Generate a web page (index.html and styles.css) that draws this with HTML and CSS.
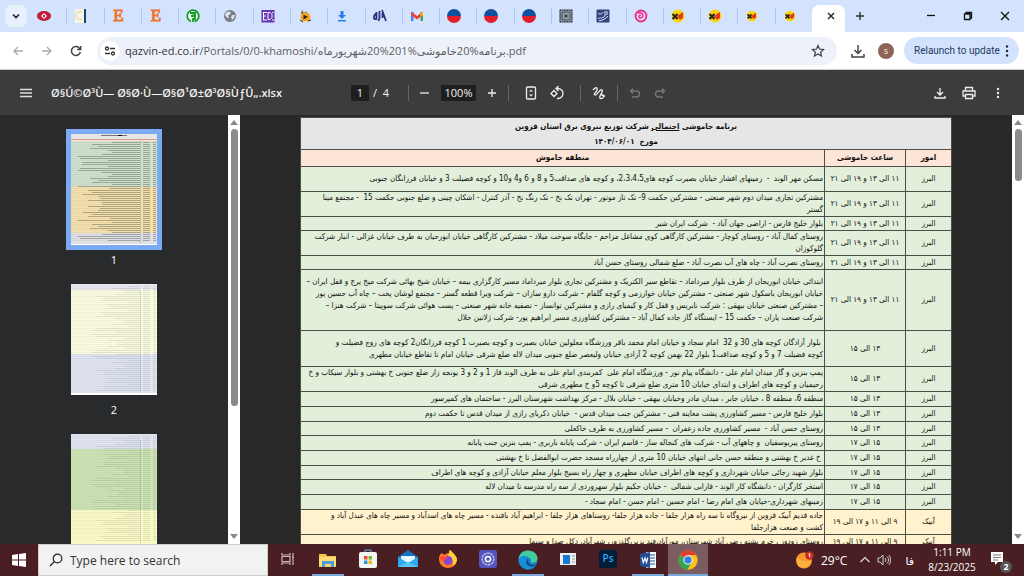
FILE: index.html
```html
<!DOCTYPE html>
<html lang="en">
<head>
<meta charset="utf-8">
<title>PDF viewer</title>
<link rel="stylesheet" href="styles.css">
</head>
<body>
<header class="tabstrip">
  <button class="tab-search" aria-label="Search tabs"><svg width="10" height="10" viewBox="0 0 10 10"><path d="M2 3.500l3 3 3-3" fill="none" stroke="#222" stroke-width="1.600"/></svg></button>
  <nav class="tabs" aria-label="Tabs">
    <a href="#" class="tab" aria-label="Tab 1"><svg viewBox="0 0 16 16"><ellipse cx="8" cy="8" rx="7" ry="5" fill="#c2183a"/><path d="M5 8l3-3 3 3-3 3z" fill="#fff"/><circle cx="8" cy="8" r="1.200" fill="#c2183a"/></svg></a>
    <a href="#" class="tab" aria-label="Tab 2"><svg viewBox="0 0 16 16"><rect x="2" y="1" width="11" height="14" fill="#f7f4ea"/><path d="M9 4a4 4 0 1 0 0 7" fill="none" stroke="#f0cf85"/><rect x="11" y="1" width="2" height="14" fill="#15486b"/></svg></a>
    <a href="#" class="tab" aria-label="Tab 3"><span class="letter">E</span></a>
    <a href="#" class="tab" aria-label="Tab 4"><span class="letter">E</span></a>
    <a href="#" class="tab" aria-label="Tab 5"><svg viewBox="0 0 16 16"><circle cx="8" cy="8" r="5.800" fill="#f4fbf5" stroke="#159a28" stroke-width="1.800" stroke-dasharray="32 4" transform="rotate(110 8 8)"/><path d="M5 5h5v2.500H7M6 8h4v3H8v3" fill="none" stroke="#159a28" stroke-width="1.800"/></svg></a>
    <a href="#" class="tab" aria-label="Tab 6"><svg viewBox="0 0 16 16"><circle cx="8" cy="8" r="6" fill="#777c83"/><path d="M4 4.500l3-1 2 1-1 2-2 1 1 2-1 1-3-3zM10 7l3 0-1 3-2 2-1-3z" fill="#d7e4f8"/></svg></a>
    <a href="#" class="tab" aria-label="Tab 7"><svg viewBox="0 0 16 16"><rect x="1.500" y="2" width="13" height="12.500" fill="#6636b5"/><path d="M3 4.500h4M3 8h3M3 12h4M3.500 4.500V12M8 4.500h2l2 2v3l-2 2H8zM12 4.500l1.500 0M12 12h2" fill="none" stroke="#fff"/></svg></a>
    <a href="#" class="tab" aria-label="Tab 8"><svg viewBox="0 0 16 16"><path d="M4 6l1-4 2 3 3-2-1 4z" fill="#7a5a3a"/><ellipse cx="8.500" cy="9" rx="5" ry="4.500" fill="#f4a51c"/><path d="M6.500 6.500l4.500 2.500-4.500 2.500z" fill="#35251b"/><path d="M3 12l3 2M11 13l3-1" stroke="#35251b"/></svg></a>
    <a href="#" class="tab" aria-label="Tab 9"><svg viewBox="0 0 16 16"><path d="M6.500 3h3v4H12l-4 4-4-4h2.500zM4 12h8v1.500H4z" fill="#2a7ff0"/></svg></a>
    <a href="#" class="tab" aria-label="Tab 10"><svg viewBox="0 0 16 16"><path d="M4.500 4v7c-3.500 1-3.500-3 0-6M7.500 3v7l-1 3M10 2l4 11M10.500 5v5" fill="none" stroke="#30307e" stroke-width="1.800"/></svg></a>
    <a href="#" class="tab" aria-label="Tab 11"><svg viewBox="0 0 16 16"><path d="M2 13V4h2.500v9z" fill="#4285f4"/><path d="M11.500 13V4H14v9z" fill="#34a853"/><path d="M2 3.500L8 8l6-4.500V7l-6 4.500L2 7z" fill="#ea4335"/><path d="M11.500 5.500L14 3.500V7l-2.500 2z" fill="#fbbc04"/></svg></a>
    <a href="#" class="tab" aria-label="Tab 12"><span class="disc"></span></a>
    <a href="#" class="tab" aria-label="Tab 13"><span class="disc"></span></a>
    <a href="#" class="tab" aria-label="Tab 14"><span class="disc"></span></a>
    <a href="#" class="tab" aria-label="Tab 15"><svg viewBox="0 0 16 16"><rect x="1.500" y="1.500" width="13" height="13" fill="#35424d"/><path d="M3 3h3v3H3zM10 3h3v3h-3zM3 10h3v3H3zM10 10h3v3h-3zM6 6h4v4H6zM8 2v4M8 10v4M2 8h4M10 8h4" fill="none" stroke="#c4ccd2" stroke-width=".8"/></svg></a>
    <a href="#" class="tab" aria-label="Tab 16"><svg viewBox="0 0 16 16"><rect x="1.500" y="1.500" width="13" height="13" rx="1" fill="#33437f"/><path d="M3 5c2 2 4 1 5-1M10 3v5c-2 3-5 1-7 3M12 3v4M4 13c4-1 7-2 9-5" fill="none" stroke="#e4e9f8"/></svg></a>
    <a href="#" class="tab" aria-label="Tab 17"><svg viewBox="0 0 16 16"><circle cx="8" cy="8" r="5.500" fill="#fbd3e8" stroke="#e0308f" stroke-width="1.800"/><path d="M5 5c5-2 7 5 2 5-2-1-1-3 1-3" fill="none" stroke="#e0308f" stroke-width="1.500"/></svg></a>
    <a href="#" class="tab" aria-label="Tab 18"><svg viewBox="0 0 16 16"><circle cx="8" cy="8" r="6.500" fill="#fbd50c"/><path d="M2.500 6l5 5M7.500 6l-5 5" stroke="#222" stroke-width="2"/><path d="M7 8l6-4v6l-3 2z" fill="#e13a20"/></svg></a>
    <a href="#" class="tab" aria-label="Tab 19"><svg viewBox="0 0 16 16"><circle cx="8" cy="8" r="6.500" fill="#fbd50c"/><path d="M2.500 6l5 5M7.500 6l-5 5" stroke="#222" stroke-width="2"/><path d="M7 8l6-4v6l-3 2z" fill="#e13a20"/></svg></a>
    <a href="#" class="tab" aria-label="Tab 20"><svg viewBox="-2 -2 20 20"><circle cx="8" cy="8" r="6.500" fill="#fbd50c"/><path d="M2.500 6l5 5M7.500 6l-5 5" stroke="#222" stroke-width="2"/><path d="M7 8l6-4v6l-3 2z" fill="#e13a20"/></svg></a>
    <a href="#" class="tab" aria-label="Tab 21"><svg viewBox="-2 -2 20 20"><circle cx="8" cy="8" r="6.500" fill="#fbd50c"/><path d="M2.500 6l5 5M7.500 6l-5 5" stroke="#222" stroke-width="2"/><path d="M7 8l6-4v6l-3 2z" fill="#e13a20"/></svg></a>
  </nav>
  <div class="tab-active"><button class="plain" aria-label="Close tab"><svg width="8" height="8" viewBox="0 0 8 8"><path d="M1 1l6 6M7 1L1 7" stroke="#222" stroke-width="1.400"/></svg></button></div>
  <button class="plain new-tab" aria-label="New tab"><svg width="10" height="10" viewBox="0 0 10 10"><path d="M5 1v8M1 5h8" stroke="#333" stroke-width="1.400"/></svg></button>
  <div class="window-buttons">
    <button class="plain" aria-label="Minimize"><svg width="10" height="10" viewBox="0 0 10 10"><path d="M1 4.500h8" stroke="#111" stroke-width="1.300"/></svg></button>
    <button class="plain" aria-label="Restore"><svg width="10" height="10" viewBox="0 0 10 10"><path d="M1.500 3h5.500v5.500H1.500zM3 3V1.500h5.500V7H7" fill="none" stroke="#111" stroke-width="1.300"/></svg></button>
    <button class="plain" aria-label="Close"><svg width="10" height="10" viewBox="0 0 10 10"><path d="M1 1l8 8M9 1L1 9" stroke="#111" stroke-width="1.300"/></svg></button>
  </div>
</header>

<div class="navbar">
  <div class="nav-buttons">
    <button class="plain" aria-label="Back"><svg width="12" height="12" viewBox="0 0 12 12"><path d="M11 6H2M6 2L2 6l4 4" fill="none" stroke="#aaa" stroke-width="1.300"/></svg></button>
    <button class="plain" aria-label="Forward"><svg width="12" height="12" viewBox="0 0 12 12"><path d="M1 6h9M6 2l4 4-4 4" fill="none" stroke="#aaa" stroke-width="1.300"/></svg></button>
    <button class="plain" aria-label="Reload"><svg width="12" height="12" viewBox="0 0 12 12"><path d="M10.300 7A4.500 4.500 0 1 1 9 2.700L10.500 4M10.700 1v3.500H7.200" fill="none" stroke="#444" stroke-width="1.500"/></svg></button>
  </div>
  <div class="omnibox">
    <button class="site-info" aria-label="Site information"><svg width="12" height="12" viewBox="0 0 12 12"><g fill="none" stroke="#333" stroke-width="1.300"><circle cx="3" cy="3.500" r="1.500"/><path d="M6 3.500h5M1 8.500h5"/><circle cx="9" cy="8.500" r="1.500"/></g></svg></button>
    <div class="url" role="textbox" aria-label="Address"><span class="host">qazvin-ed.co.ir</span>/Portals/0/0-khamoshi/برنامه%20خاموشی%201%20شهریورماه.pdf</div>
    <button class="plain" aria-label="Bookmark"><svg width="14" height="14" viewBox="0 0 14 14"><path d="M7 1.500l1.600 3.700 4 .3-3 2.700.9 3.900L7 10l-3.500 2.100.9-3.900-3-2.700 4-.3z" fill="none" stroke="#444" stroke-width="1.200"/></svg></button>
  </div>
  <button class="plain" aria-label="Downloads"><svg width="14" height="14" viewBox="0 0 14 14"><path d="M7 1v8M3.500 6L7 9.500 10.500 6M1 10v3h12v-3" fill="none" stroke="#444" stroke-width="1.500"/></svg></button>
  <button class="avatar">S</button>
  <button class="relaunch">Relaunch to update <svg width="4" height="14" viewBox="0 0 4 14"><g fill="#223"><circle cx="2" cy="2.500" r="1.200"/><circle cx="2" cy="7" r="1.200"/><circle cx="2" cy="11.500" r="1.200"/></g></svg></button>
</div>

<div class="pdfbar">
  <div class="pdf-left">
    <button class="plain" aria-label="Menu"><svg width="12" height="12" viewBox="0 0 12 12"><path d="M0 2.500h12M0 6h12M0 9.500h12" stroke="#ddd" stroke-width="1.300"/></svg></button>
    <h1 class="doc-name">Ø§Ú©Ø³Ù— Ø§Ø·Ù—Ø§Ø¹Ø±Ø³Ø§ÙƒÛ„.xlsx</h1>
  </div>
  <div class="pdf-center">
    <input class="page-no" aria-label="Page number" value="1"><span class="page-total">/&nbsp; 4</span>
    <i class="rule"></i>
    <button class="plain" aria-label="Zoom out"><svg width="10" height="10" viewBox="0 0 10 10"><path d="M0 5h9" stroke="#eee" stroke-width="1.300"/></svg></button>
    <input class="zoom" aria-label="Zoom level" value="100%">
    <button class="plain" aria-label="Zoom in"><svg width="10" height="10" viewBox="0 0 10 10"><path d="M5 1v8M1 5h8" stroke="#eee" stroke-width="1.300"/></svg></button>
    <i class="rule"></i>
    <button class="plain fit" aria-label="Fit to page"><svg width="14" height="14" viewBox="0 0 14 14"><rect x="2.500" y="1" width="9" height="12" rx="1" fill="none" stroke="#eee" stroke-width="1.300"/><path d="M5 5.500L7 3.500l2 2zM5 8.500l2 2 2-2z" fill="#eee"/></svg></button>
    <button class="plain rotate" aria-label="Rotate"><svg width="14" height="14" viewBox="0 0 14 14"><path d="M4 4.500L7 7.500 4 10.500 1 7.500zM6.500 2.500h1.500a5 5 0 0 1 0 10H7M8.500 0L6 2.500 8.500 5" fill="none" stroke="#eee" stroke-width="1.300"/></svg></button>
    <i class="rule"></i>
    <button class="plain" aria-label="Draw"><svg width="14" height="14" viewBox="0 0 14 14"><path d="M1 4c2-3 5-3 4 0S1 8 3 9s5-7 7-5-4 6-2 8 5-2 3-3-2 1 2 1" fill="none" stroke="#eee" stroke-width="1.300"/></svg></button>
    <i class="rule"></i>
    <button class="plain" aria-label="Undo"><svg width="12" height="12" viewBox="0 0 12 12"><path d="M4 1.500L1.500 4 4 6.500M2 4h5.500a3 3 0 0 1 0 6H3" fill="none" stroke="#777" stroke-width="1.300"/></svg></button>
    <button class="plain" aria-label="Redo"><svg width="12" height="12" viewBox="0 0 12 12"><path d="M8 1.500L10.500 4 8 6.500M10 4H4.500a3 3 0 0 0 0 6H9" fill="none" stroke="#777" stroke-width="1.300"/></svg></button>
  </div>
  <div class="pdf-right">
    <button class="plain" aria-label="Download"><svg width="12" height="12" viewBox="0 0 12 12"><path d="M6 1v7M3 5l3 3 3-3M1 9v2h10V9" fill="none" stroke="#eee" stroke-width="1.300"/></svg></button>
    <button class="plain" aria-label="Print"><svg width="14" height="14" viewBox="0 0 14 14"><path d="M3.500 4.500v-3h7v3M3.500 10H1V5h12v5h-2.500M3.500 8.500h7v4h-7z" fill="none" stroke="#eee" stroke-width="1.300"/></svg></button>
    <button class="plain" aria-label="More"><svg width="12" height="12" viewBox="0 0 12 12"><g fill="#eee"><circle cx="6" cy="2" r="1.200"/><circle cx="6" cy="6" r="1.200"/><circle cx="6" cy="10" r="1.200"/></g></svg></button>
  </div>
</div>

<main class="viewer">
  <aside class="thumbs">
    <a href="#p1" class="thumb current"><svg class="mini" data-page="1" viewBox="0 0 86 111"></svg><span>1</span></a>
    <a href="#p2" class="thumb"><svg class="mini" data-page="2" viewBox="0 0 86 111"></svg><span>2</span></a>
    <a href="#p3" class="thumb" aria-label="3"><svg class="mini" data-page="3" viewBox="0 0 86 111"></svg></a>
  </aside>
  <div class="scroll"><i class="up"></i><i class="bar bar-long"></i><i class="down"></i></div>
  <section class="stage">
    <table class="sheet" dir="rtl" lang="fa" id="p1">
      <colgroup><col class="c-unit"><col class="c-time"><col></colgroup>
      <thead>
        <tr class="title"><th colspan="3">برنامه خاموشی <u>احتمالی</u> شرکت توزیع نیروی برق استان قزوین<br>مورخ  ۱۴۰۴/۰۶/۰۱</th></tr>
        <tr class="heads"><th>امور</th><th>ساعت خاموشی</th><th>منطقه خاموش</th></tr>
      </thead>
      <tbody class="green">
        <tr class="two"><td>البرز</td><td>۱۱ الی ۱۳ و ۱۹ الی ۲۱</td><td>مسکن مهر الوند  -  زمینهای افشار خیابان بصیرت کوچه های2،3،4،5، و کوچه های صداقت5 و 8 و 6 و4 و10 و کوچه فضیلت 3 و خیابان فرزانگان جنوبی</td></tr>
        <tr class="two"><td>البرز</td><td>۱۱ الی ۱۳ و ۱۹ الی ۲۱</td><td>مشترکین تجاری میدان دوم شهر صنعتی - مشترکین حکمت 9- تک تاز موتور - تهران تک نخ - تک رنگ نخ - آذر کنترل - اشکان چینی و ضلع جنوبی حکمت 15  - مجتمع مینا<br>گستر</td></tr>
        <tr class="snug"><td>البرز</td><td>۱۱ الی ۱۳ و ۱۹ الی ۲۱</td><td>بلوار خلیج فارس - اراضی جهان آباد -  شرکت ایران شیر</td></tr>
        <tr class="two"><td>البرز</td><td>۱۱ الی ۱۳ و ۱۹ الی ۲۱</td><td>روستای کمال آباد - روستای کوچار - مشترکین کارگاهی کوی مشاغل مزاحم - جایگاه سوخت میلاد - مشترکین کارگاهی خیابان ابورحیان به طرف خیابان غزالی - انبار شرکت<br>گلوکوزان</td></tr>
        <tr class="snug"><td>البرز</td><td>۱۱ الی ۱۳ و ۱۹ الی ۲۱</td><td>روستای نصرت آباد - چاه های آب نصرت آباد - ضلع شمالی روستای حسن آباد</td></tr>
        <tr class="four"><td>البرز</td><td>۱۱ الی ۱۳ و ۱۹ الی ۲۱</td><td>ابتدائی خیابان ابوریحان از طرف بلوار میرداماد – تقاطع سیر الکتریک و مشترکین تجاری بلوار میرداماد مسیر کارگزاری بیمه – خیابان شیخ بهائی شرکت میخ پرچ و قفل ایران –<br>خیابان ابوریحان باسکول شهر صنعتی – مشترکین خیابان خوارزمی و کوچه گلفام – شرکت دارو سازان – شرکت ویرا قطعه گستر – مجتمع لوشان پخت – چاه آب حسین پور<br>– مشترکین صنعتی خیابان بیهقی : شرکت نابریس و قفل کار و کیمیای رازی و مشترکین توانساز – تصفیه خانه شهر صنعتی – پست هوائی شرکت سوپیتا – شرکت هنزا –<br>شرکت صنعت یاران – حکمت 15 – ایستگاه گاز جاده کمال آباد – مشترکین کشاورزی مسیر ابراهیم پور- شرکت ژلاتین حلال</td></tr>
        <tr class="three"><td>البرز</td><td>۱۳ الی ۱۵</td><td> بلوار آزادگان کوچه های 30 و 32  امام سجاد و خیابان امام محمد باقر ورزشگاه معلولین خیابان بصیرت و کوچه بصیرت 1 کوچه فرزانگان2 کوچه های زوج فضیلت و<br>کوچه فضیلت 7 و 5 و کوچه صداقت1 بلوار 22 بهمن کوچه 2 آزادی خیابان ولیعصر ضلع جنوبی میدان لاله ضلع شرقی خیابان امام تا تقاطع خیابان مطهری</td></tr>
        <tr class="two"><td>البرز</td><td>۱۳ الی ۱۵</td><td>پمپ بنزین و گاز میدان امام علی - دانشگاه پیام نور - ورزشگاه امام علی  کمربندی امام علی به طرف الوند فاز 1 و 2 و 3 یونجه زار ضلع جنوبی خ بهشتی و بلوار سیکاب و خ<br>رحیمیان و کوچه های اطراف و ابتدای خیابان 10 متری ضلع شرقی تا کوچه 5و خ مطهری شرقی</td></tr>
        <tr><td>البرز</td><td>۱۳ الی ۱۵</td><td>منطقه 6، منطقه 8 ، خیابان جابر ، میدان مادر وخیابان بیهقی - خیابان بلال - مرکز بهداشت شهرستان البرز - ساختمان های کمپرسور</td></tr>
        <tr><td>البرز</td><td>۱۳ الی ۱۵</td><td>بلوار خلیج فارس - مسیر کشاورزی پشت معاینه فنی - مشترکین جنب میدان قدس -  خیابان ذکریای رازی از میدان قدس تا حکمت دوم</td></tr>
        <tr class="snug"><td>البرز</td><td>۱۳ الی ۱۵</td><td>روستای حسن آباد -  مسیر کشاورزی جاده زعفران  - مسیر کشاورزی به طرف خاکعلی</td></tr>
        <tr><td>البرز</td><td>۱۵ الی ۱۷</td><td>روستای پیریوسفیان  و چاههای آب - شرکت های کنجاله ساز - قاسم ایران - شرکت پایانه باربری - پمپ بنزین جنب پایانه</td></tr>
        <tr><td>البرز</td><td>۱۵ الی ۱۷</td><td> خ غدیر خ بهشتی و منطقه حسن جانی انتهای خیابان 10 متری از چهارراه مسجد حضرت ابوالفضل تا خ بهشتی</td></tr>
        <tr class="snug"><td>البرز</td><td>۱۵ الی ۱۷</td><td>بلوار شهید رجائی خیابان شهرداری و کوچه های اطراف خیابان مطهری و چهار راه بسیج بلوار معلم خیابان آزادی و کوچه های اطراف</td></tr>
        <tr><td>البرز</td><td>۱۵ الی ۱۷</td><td>استخر کارگران - دانشگاه کار الوند - فارابی شمالی  - خیابان حکیم بلوار سهروردی از سه راه مدرسه تا میدان لاله</td></tr>
        <tr><td>البرز</td><td>۱۵ الی ۱۷</td><td>زمینهای شهرداری-خیابان های امام رضا - امام حسین - امام حسن - امام سجاد -</td></tr>
      </tbody>
      <tbody class="cream">
        <tr class="two"><td>آبیک</td><td>۹ الی ۱۱ و ۱۷ الی ۱۹</td><td>جاده قدیم آبیک قزوین از نیروگاه تا سه راه هزار جلفا - جاده هزار جلفا- روستاهای هزار جلفا - ابراهیم آباد بافنده - مسیر چاه های اسدآباد و مسیر چاه های عبدل آباد و<br>کشت و صنعت هزارجلفا</td></tr>
        <tr><td>آبیک</td><td>۹ الی ۱۱ و ۱۷ الی ۱۹</td><td>روستای زودوز ، خرم پشته رضی آباد شهرستان، مورآباد،فند پزیر،گلدزور، شهرآباد، دکل صدا و سیما</td></tr>
      </tbody>
    </table>
  </section>
  <div class="scroll"><i class="up"></i><i class="bar bar-short"></i><i class="down"></i></div>
</main>

<footer class="taskbar">
  <button class="plain start" aria-label="Start"><svg width="14" height="14" viewBox="0 0 14 14"><path d="M0 2l6-1v5.500H0zM7 .9L14 0v6.500H7zM0 7.500h6V13l-6-1zM7 7.500h7V14l-7-1z" fill="#fff"/></svg></button>
  <label class="search"><svg width="14" height="14" viewBox="0 0 14 14"><circle cx="8.500" cy="5.500" r="4.300" fill="none" stroke="#222" stroke-width="1.200"/><path d="M5.500 8.500L1 13" stroke="#222" stroke-width="1.300"/></svg><input aria-label="Search" placeholder="Type here to search"></label>
  <nav class="apps" aria-label="Apps">
    <button class="app" aria-label="Task view"><svg viewBox="0 0 20 20"><path d="M4 4v2h8V4M4 16v-2h8v2M4 7.500h8v5H4zM15 4v12M14 8h2" fill="none" stroke="#c9b6b8" stroke-width="1.200"/></svg></button>
    <button class="app open" aria-label="File Explorer"><svg viewBox="0 0 20 20"><path d="M1 4h7l1 2h9v11H1z" fill="#f5c34b"/><path d="M1 7h17v9H1z" fill="#fddc78"/><path d="M4 11h12v6h-3v-3H7v3H4z" fill="#4a9fd8"/></svg></button>
    <button class="app" aria-label="Store"><svg viewBox="0 0 20 20"><path d="M7 4V1h6v3" fill="none" stroke="#5eb4e6"/><rect x="1" y="3" width="18" height="16" rx="2" fill="#f4f4f4"/><path d="M6 7h3.500v3.500H6z" fill="#e8502b"/><path d="M10.500 7H14v3.500h-3.500z" fill="#7cb72a"/><path d="M6 11.500h3.500V15H6z" fill="#2499dc"/><path d="M10.500 11.500H14V15h-3.500z" fill="#f5b51b"/></svg></button>
    <button class="app" aria-label="Mail"><svg viewBox="0 0 20 20"><path d="M0 8l10-7 10 7v10H0z" fill="#1672c5"/><path d="M3 7h14v7H3z" fill="#e8f6ff"/><path d="M0 8l10 6L20 8v10H0z" fill="#2ba9ec"/><path d="M0 18l10-5 10 5z" fill="#59c7f6"/></svg></button>
    <button class="app" aria-label="Firefox"><svg viewBox="0 0 20 20"><path d="M4 4l2 2c1-1 3-2 5-2 0-2 0-3 1-3 2 2 6 5 7 9 0 5-4 9-9 9s-9-4-9-9c0-3 1-5 3-6z" fill="#ff7b22"/><path d="M12 1c2 2 6 5 7 9 0 3-2 6-4 7 1-5-2-9-5-10 1-2 1-5 2-6z" fill="#ffd23c"/><circle cx="10" cy="11.500" r="4.500" fill="#8447d2"/><path d="M2 8c3-2 6 0 8 1-2 1-4 1-4 3-3 0-4-2-4-4z" fill="#ff4b3a"/></svg></button>
    <button class="app" aria-label="Settings app"><svg viewBox="0 0 20 20"><rect x="1" y="1" width="18" height="18" rx="3" fill="#5554bd"/><circle cx="10" cy="10" r="5.800" fill="none" stroke="#b9b9ea" stroke-width="1.600" stroke-dasharray="2.500 .7"/><circle cx="10" cy="10" r="2.600" fill="none" stroke="#fff" stroke-width="1.500"/></svg></button>
    <button class="app open" aria-label="Edge"><svg viewBox="0 0 20 20"><circle cx="10" cy="10" r="9.500" fill="#1977c8"/><path d="M.5 9C1 3 6 .5 10 .5c6 0 9.500 4 9.500 8s-4 5-7 4c1-2 0-5-3-5-4-1-8 0-9 1.500z" fill="#42cda1"/><path d="M.5 9c3-4 8-4 10-1-3 0-4 4-2 7 2 3 6 3 9 1-3 4-8 4.500-12 2S.5 12 .5 9z" fill="#1592d6"/><path d="M10.500 8c-2 2-1 6 3 7l4 0c-4 3-9 0-9-3 0-2 1-3 2-4z" fill="#0e3f7d"/></svg></button>
    <button class="app" aria-label="Window app"><svg viewBox="0 0 20 20"><rect x="2" y="4" width="16" height="12" fill="#eee"/><rect x="5" y="6" width="7" height="9" fill="#1879cf"/><path d="M14 7h3M14 10h3M14 13h3" stroke="#999"/></svg></button>
    <button class="app" aria-label="Photoshop"><span class="ps">Ps</span></button>
    <button class="app open" aria-label="Word"><svg viewBox="0 0 20 20"><rect x="8" y="2" width="10" height="16" fill="#f4f6fb"/><path d="M11 5h6M11 8h6M11 11h6M11 14h6" stroke="#2b579a"/><path d="M2 4l10-2v16L2 16z" fill="#244f94"/><path d="M4 7.500l1.300 5L7 8l1.500 4.500 1.300-5" fill="none" stroke="#fff" stroke-width="1.200"/></svg></button>
    <button class="app open active" aria-label="Chrome"><svg viewBox="0 0 20 20"><circle cx="10" cy="10" r="9.500" fill="#fbc116"/><path d="M10 10L1.800 5.200A9.500 9.500 0 0 1 18.200 5.300H10z" fill="#e33b2e"/><path d="M10 10L1.800 5.200A9.500 9.500 0 0 0 9.500 19.500l4.500-7.200z" fill="#2da94f"/><path d="M10 5.300h8.200A9.500 9.500 0 0 1 9.500 19.500l4.500-7z" fill="#fbc116"/><circle cx="10" cy="10" r="4.700" fill="#fff"/><circle cx="10" cy="10" r="3.700" fill="#3b7de8"/></svg></button>
  </nav>
  <div class="tray">
    <span class="weather"><svg width="18" height="18" viewBox="0 0 18 18"><circle cx="8" cy="9.500" r="8" fill="#f9962b"/><path d="M1 6c3 4 9 5 14 4-1 5-6 8-11 6-3-2-4-6-3-10z" fill="#fdb13e"/><circle cx="13.500" cy="4.500" r="4.200" fill="#c42b1c"/><path d="M12.500 3.500l1.200-1v4" fill="none" stroke="#fff"/></svg>29°C</span>
    <svg width="12" height="12" viewBox="0 0 12 12"><path d="M1.500 8L6 3.500 10.500 8" fill="none" stroke="#ddd" stroke-width="1.200"/></svg>
    <svg width="14" height="12" viewBox="0 0 14 12"><path d="M1 4h2l3-3v10L3 8H1zM8 4c1 1 1 3 0 4M10 2.500c2 2 2 5 0 7M12 1c2 3 2 7 0 10" fill="none" stroke="#ccb"/></svg>
    <span class="lang">فا</span>
    <time class="clock">1:11 PM<br>8/23/2025</time>
    <button class="plain notes" aria-label="2 notifications"><svg width="18" height="18" viewBox="0 0 18 18"><path d="M1 1h12v10H8l-3 3v-3H1z" fill="#fff"/><path d="M3 4h8M3 6.500h8M3 9h5" stroke="#777"/></svg><b class="badge">2</b></button>
  </div>
</footer>
<script src="script.js"></script>
</body>
</html>
```
FILE: styles.css
```css
* { box-sizing: border-box; }
body {
  margin: 0;
  height: 100vh;
  display: flex;
  flex-direction: column;
  overflow: hidden;
  font-family: "Open Sans", "DejaVu Sans", sans-serif;
  font-size: 11px;
  color: #333;
}
button, input { font: inherit; color: inherit; }
button { border: 0; padding: 0; cursor: pointer; }
svg { display: block; flex: none; }
.plain { background: none; display: flex; align-items: center; justify-content: center; }

/* Tab strip */
.tabstrip { height: 32px; flex: none; display: flex; align-items: center; background: #d3e3fd; }
.tab-search { width: 22px; height: 22px; margin: 0 3px 0 5px; border-radius: 7px; background: #e9f1fe; display: flex; align-items: center; justify-content: center; }
.tabs { flex: 0 1 782px; display: flex; }
.tab { flex: 1; height: 16px; padding-left: 6px; border-right: 1px solid #a8c7fa; text-decoration: none; }
.tab:last-child { border-right: 0; }
.tab svg { width: 16px; height: 16px; }
.letter { display: block; width: 16px; text-align: center; font: 17px/16px "Liberation Serif", serif; color: #f1732b; -webkit-text-stroke: 1px #f1732b; }
.disc { display: block; width: 14px; height: 14px; margin: 1px; border-radius: 50%; background: linear-gradient(#114f9f 50%, #e21d2c 50%); }
.tab-active { align-self: flex-end; width: 33px; height: 27px; border-radius: 7px 7px 0 0; background: #fff; display: flex; align-items: center; justify-content: center; padding: 0 0 5px 5px; }
.new-tab { width: 30px; height: 24px; }
.window-buttons { margin-left: auto; display: flex; gap: 27px; padding-right: 14px; }

/* Address row */
.navbar { height: 38px; flex: none; display: flex; align-items: center; background: #fff; border-bottom: 1px solid #ccc; padding: 0 5px 0 12px; }
.nav-buttons { display: flex; gap: 17px; width: 85px; }
.omnibox { flex: 1; height: 28px; border-radius: 14px; background: #edf1f9; display: flex; align-items: center; padding: 0 12px 0 3px; }
.site-info { width: 20px; height: 20px; border-radius: 50%; background: #fff; display: flex; align-items: center; justify-content: center; }
.url { flex: 1; padding-left: 5px; font-size: 11px; white-space: nowrap; color: #5b5f64; }
.host { color: #33363a; }
.navbar > .plain { margin-left: 14px; }
.avatar { width: 16px; height: 16px; margin: 0 10px 0 13px; border-radius: 50%; background: #8d6358; color: #fff; font-size: 8px; }
.relaunch { height: 27px; width: 115px; border-radius: 14px; background: #d3e3fd; display: flex; align-items: center; justify-content: space-between; padding: 0 10px; font: 10px Roboto, sans-serif; white-space: nowrap; color: #243a63; }

/* PDF toolbar */
.pdfbar { height: 45px; flex: none; display: grid; grid-template-columns: 351px 1fr auto; align-items: center; background: #3c3c3c; color: #f1f1f1; }
.pdf-left { display: flex; align-items: center; gap: 19px; padding-left: 20px; }
.doc-name { margin: 0; font-size: 11px; font-weight: 600; white-space: nowrap; }
.pdf-center { display: flex; align-items: center; }
.page-no, .zoom { border: 0; background: #1e1e1e; text-align: center; height: 16px; padding: 0; font-size: 11px; }
.page-no { width: 18px; }
.zoom { width: 35px; margin: 0 11px; }
.page-total { padding-left: 4px; width: 28px; white-space: nowrap; }
.rule { width: 1px; height: 16px; background: #666; margin: 0 11px; }
.fit { margin-left: 4px; }
.rotate { margin: 0 5px 0 12px; }
.pdf-center .plain:last-child { margin-left: 13px; }
.pdf-right { display: flex; gap: 16px; padding-right: 20px; }

/* Viewer */
.viewer { flex: 1; min-height: 0; display: flex; background: #282828; }
.thumbs { width: 228px; flex: none; overflow: hidden; background: #282a2b; display: flex; flex-direction: column; align-items: center; gap: 12px; padding-top: 14px; }
.thumb { flex: none; display: flex; flex-direction: column; align-items: center; color: #fff; text-decoration: none; line-height: 15px; }
.thumb span { margin-top: 2px; }
.mini { width: 96px; height: 121px; padding: 5px; }
.current .mini { background: #7aa9f5; }
.scroll { width: 12px; flex: none; background: #fff; display: flex; flex-direction: column; align-items: center; padding: 5px 0; }
.up, .down { border: 4px solid transparent; }
.up { border-top: 0; border-bottom: 5px solid #888; }
.down { border-bottom: 0; border-top: 5px solid #888; margin-top: auto; }
.bar { width: 7px; margin-top: 4px; border-radius: 4px; background: #8b8b8b; }
.bar-long { height: 66%; }
.bar-short { height: 52px; }
.stage { flex: 1; min-width: 0; overflow: hidden; display: flex; justify-content: center; align-items: flex-start; padding-top: 2px; }

/* Schedule sheet */
.sheet { width: 652px; flex: none; table-layout: fixed; border-collapse: collapse; font: 8px/12px "DejaVu Sans Condensed", "DejaVu Sans", sans-serif; color: #111; }
.c-unit { width: 46px; }
.c-time { width: 81px; }
.sheet th, .sheet td { border: 1px solid #4a4f48; padding: 0 1px; text-align: center; white-space: pre; }
.sheet td:last-child { text-align: right; }
.sheet tr { height: 15px; }
.sheet .snug { height: 14px; }
.sheet .two { height: 25px; }
.sheet .three { height: 36px; }
.sheet .four { height: 61px; }
.sheet .heads { height: 17px; background: #fce4d6; }
.sheet .title { height: 32px; background: #e7e6e6; line-height: 15px; }
.green { background: #e2efda; }
.cream { background: #fff2cc; }

/* Taskbar */
.taskbar { height: 32px; flex: none; display: flex; background: #4a1f24; color: #fff; }
.start { width: 38px; }
.search { width: 230px; display: flex; align-items: center; gap: 7px; padding-left: 10px; background: #f2f2f2; border: 1px solid #ccc; }
.search input { flex: 1; min-width: 0; border: 0; padding: 0; background: none; font-size: 12px; }
.search input::placeholder { color: #333; opacity: 1; }
.apps { display: flex; }
.app { width: 40px; background: none; display: flex; align-items: center; justify-content: center; border-bottom: 2px solid transparent; border-left: 4px solid transparent; border-right: 4px solid transparent; background-clip: padding-box; }
.app svg { width: 20px; height: 20px; }
.open { border-bottom: 0; box-shadow: inset 0 -2px #76a9dc; }
.active { background: #7b5c60; border-left: 0; border-right: 0; }
.ps { width: 18px; height: 18px; border-radius: 3px; background: #001e36; color: #31a8ff; font-size: 10px; font-weight: 600; line-height: 17px; }
.tray { margin-left: auto; display: flex; align-items: center; gap: 6px; padding-right: 16px; }
.weather { display: flex; align-items: center; gap: 7px; font-size: 12px; margin-right: 6px; }
.lang { padding: 0 8px; }
.clock { text-align: center; font-size: 10px; line-height: 15px; width: 48px; white-space: nowrap; }
.notes { position: relative; margin-left: 8px; }
.badge { position: absolute; right: -4px; bottom: -4px; width: 12px; height: 12px; border-radius: 50%; background: #555; font-size: 9px; line-height: 12px; }
```
FILE: script.js
```js
// Draws the page previews: colour bands with rows of right-aligned strokes.
const bands = {
  1: [[0, 5, '#e7e6e6'], [5, 2, '#fce4d6'], [7, 46, '#d0e0cc'], [53, 46, '#f5dfac'], [99, 11, '#dedee4']],
  2: [[0, 6, '#e7e6ef'], [6, 64, '#fafae0'], [70, 39, '#dfe3f0']],
  3: [[0, 15, '#dfe3f0'], [15, 61, '#cde2b4'], [76, 35, '#fafac8']]
};
const ns = 'http://www.w3.org/2000/svg';
function rect(svg, x, y, w, h, fill) {
  const r = document.createElementNS(ns, 'rect');
  Object.entries({ x, y, width: w, height: h, fill }).forEach(([k, v]) => r.setAttribute(k, v));
  svg.append(r);
}
document.querySelectorAll('.mini').forEach(svg => {
  const page = svg.dataset.page;
  rect(svg, 0, 0, 86, 111, '#fff');
  bands[page].forEach(([y, h, fill]) => rect(svg, 0, y, 86, h, fill));
  const first = page === '1';
  const ink = first ? 'rgba(50,60,50,.36)' : 'rgba(60,70,60,.14)';
  for (let y = first ? 8 : 2, i = 0; y < 108; y += 2, i++) {
    const w = first ? 28 + (i * i * 7 + i * 13) % 40 : 12 + (i * i * 5 + i * 11) % 37;
    rect(svg, 69 - w, y, w, 1, ink);
    rect(svg, 0, y, 69 - w, 1, 'rgba(60,70,60,.05)');
    rect(svg, 72, y, 7, 1, ink);
    rect(svg, 82, y, 3, 1, ink);
  }
  if (first) {
    rect(svg, 30, 1, 26, 1, '#777');
    rect(svg, 47, 1, 4, 1, '#111');
    rect(svg, 0, 5, 86, 1, '#df9a86');
  }
  rect(svg, 69, 6, 1, 103, 'rgba(60,70,60,.2)');
});
```
